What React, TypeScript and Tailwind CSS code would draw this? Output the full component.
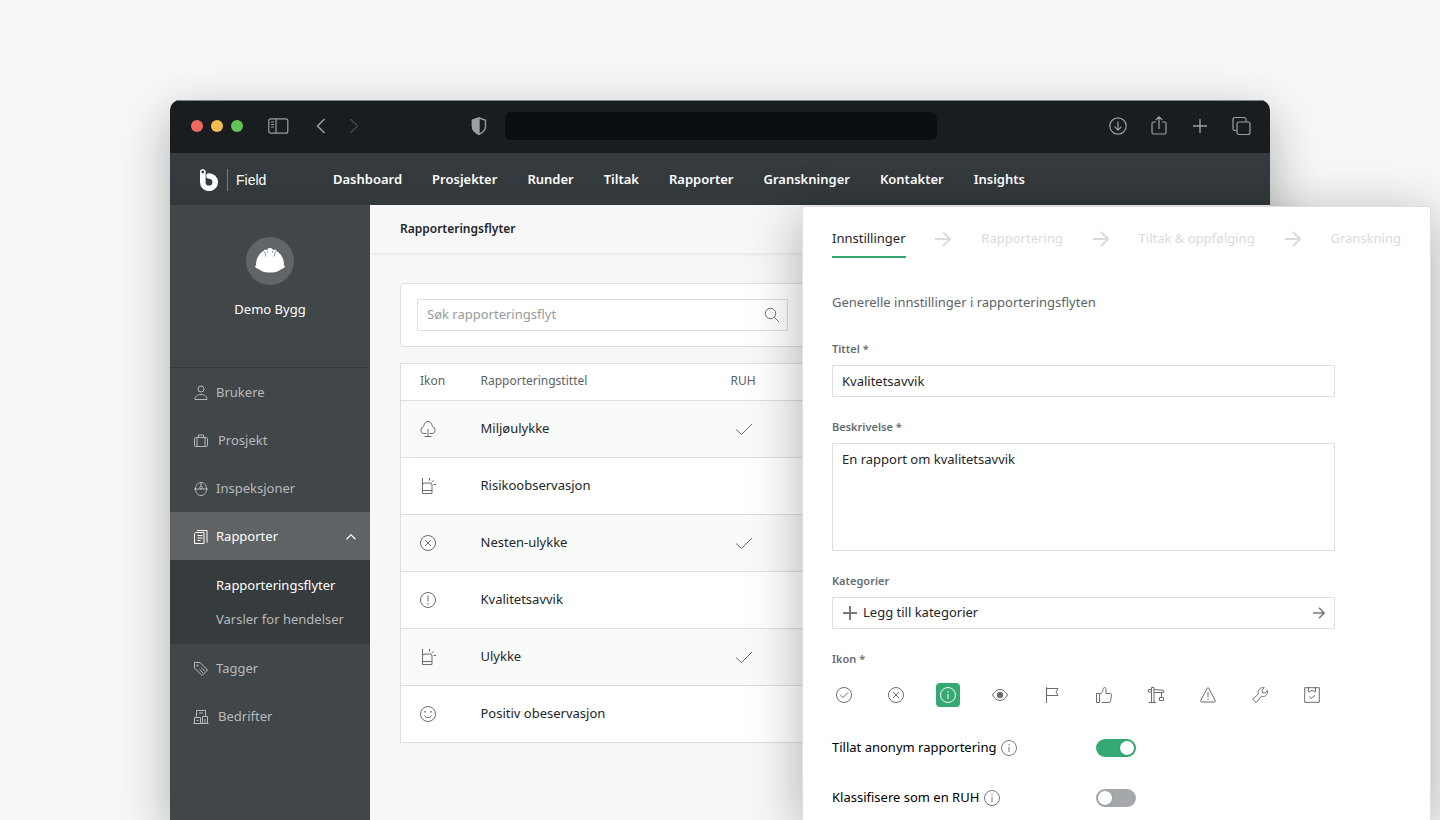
import React, { useState } from "react";
import clsx from "clsx";

type IconProps = { children: React.ReactNode; className?: string; size?: number; strokeWidth?: number };

// Thin outline icon on a 16px grid
function Icon({ children, className, size = 16, strokeWidth = 1 }: IconProps) {
  return (
    <svg
      width={size}
      height={size}
      viewBox="0 0 16 16"
      fill="none"
      stroke="currentColor"
      strokeWidth={strokeWidth}
      className={clsx("shrink-0", className)}
      aria-hidden="true"
    >
      {children}
    </svg>
  );
}

const CircleX = <><circle cx="8" cy="8" r="7.5" /><path d="M5 5l6 6M11 5l-6 6" /></>;
const CircleInfo = <><circle cx="8" cy="8" r="7.5" /><path d="M8 6.8V12M8 4v1.4" /></>;
const Siren = <path d="M2.500 0v15.500h9.500v-8.500q0-2-2-2h-5q-2.500 0-2.500 2M2.500 12.500h9.500M9.500 0v2.500M11.500 4.300l2-2M13.500 6.500h2.500" />;
const ArrowRight = <path d="M0 8h15M8 1l7 7-7 7" />;

const navItems = ["Dashboard", "Prosjekter", "Runder", "Tiltak", "Rapporter", "Granskninger", "Kontakter", "Insights"];

const menuTop = [
  {
    label: "Brukere",
    icon: <><circle cx="8" cy="4" r="3" /><path d="M2 14.500c0-3 2.300-5 6-5s6 2 6 5z" /></>,
  },
  {
    label: "Prosjekt",
    wide: true,
    icon: <><rect x="1.500" y="4.500" width="13" height="9" rx="1" /><path d="M5.500 4.500V2h5v2.500M4 4.500v9M12 4.500v9" /></>,
  },
  {
    label: "Inspeksjoner",
    icon: (
      <>
        <path d="M1 8h14M2.500 8C2.500 4.500 4.500 1.500 8 1.500s5.500 3 5.500 6.500M2.500 8c0 3.800 2.300 6.500 5.500 6.500s5.500-2.700 5.500-6.500M8 1.500V5" />
        <circle cx="8" cy="6.500" r="1.300" />
      </>
    ),
  },
];

const menuBottom = [
  {
    label: "Tagger",
    icon: <><path d="M1.500 1.500h5.500l7.500 7.500-5.500 5.500-7.500-7.500z" /><circle cx="4.500" cy="4.500" r=".6" /><path d="M6.500 8.500l3.500 3.500M8.300 6.700l3.500 3.500" /></>,
  },
  {
    label: "Bedrifter",
    wide: true,
    icon: <><path d="M3.500 7.500v-6h9v6M6 4h4M1.500 8.500h6v6h-6zM9.500 7.500h5v7h-5zM.5 14.500h15M3.500 11.500h2M12 10v4.500" /></>,
  },
];

const rows = [
  {
    title: "Miljøulykke",
    ruh: true,
    icon: <path d="M6.500 12.500H4C2.200 12.500 1 11.300 1 9.500 1 7.500 2 6 3.800 5.200 4 2.700 5.700.5 8 .5s4 2.200 4.200 4.700C14 6 15 7.500 15 9.500c0 1.800-1.200 3-3 3H9.500M8 8v7.500M4.500 15.500h7" />,
  },
  { title: "Risikoobservasjon", ruh: false, icon: Siren },
  { title: "Nesten-ulykke", ruh: true, icon: CircleX },
  { title: "Kvalitetsavvik", ruh: false, icon: <><circle cx="8" cy="8" r="7.500" /><path d="M8 3.500v6M8 11v1.700" /></> },
  { title: "Ulykke", ruh: true, icon: Siren },
  {
    title: "Positiv obeservasjon",
    ruh: false,
    icon: <><circle cx="8" cy="8" r="7.500" /><path d="M4.500 9.500c.8 2.700 6.200 2.700 7 0" /><path d="M5 5v1.500M11 5v1.500" strokeWidth="1.500" /></>,
  },
];

const iconChoices = [
  { name: "Godkjent", icon: <><circle cx="8" cy="8" r="7.500" /><path d="M4.300 8l2.700 2.500 5-5" /></> },
  { name: "Avvist", icon: CircleX },
  { name: "Informasjon", icon: CircleInfo },
  {
    name: "Observasjon",
    icon: <><path d="M.5 8C2.500 4.500 5 2.500 8 2.500s5.500 2 7.500 5.500c-2 3.500-4.500 5.500-7.500 5.500S2.500 11.500.5 8z" /><circle cx="8" cy="8" r="2.800" fill="currentColor" /></>,
  },
  { name: "Flagg", icon: <path d="M2.500 0v16M2.500 1.500h11.500l-2 3.500 2 3.500h-11.500" /> },
  {
    name: "Tommel opp",
    icon: <path d="M.5 6.500h3v9h-3zM5.500 15.500h7.500c.8 0 1.300-.5 1.500-1.200l1-6.300c.1-.9-.4-1.500-1.200-1.500H10V2.500C10 1 9.300.5 8.500.5S7.200 1.200 7 2.500C6.800 5 5.500 6.500 3.500 7" />,
  },
  {
    name: "Kran",
    icon: <path d="M3.500 15.500V.5h2.500v15M.5 15.500h7.500M3.500 2.500h-3v2.500h3M6 2.500l9.500.8v2.200H6M13.500 5.500v5M11.500 10.500h4v3h-4z" />,
  },
  { name: "Advarsel", icon: <path d="M7.200 1.200L.7 13.700c-.3.700 0 1.300.8 1.300h13c.8 0 1.100-.6.8-1.300L8.800 1.200c-.4-.7-1.200-.7-1.600 0zM8 5v5M8 11.500v1.500" /> },
  {
    name: "Verktøy",
    icon: <path d="M.7 12.300l5.500-5.100C5.500 5 6.500 2.500 8.500 1.300 9.700.5 11 .4 12.300.6L10 3.200l.4 2.400 2.500.4 2.500-2.400c.4 2-.4 4.200-2 5.200-1.300.8-2.800 1-4.100.5l-5 6.200z" />,
  },
  { name: "Sjekkliste", icon: <path d="M.7.7h14.600v14.600H.7zM4.500.7v4h1.800l.7-1.200h2l.7 1.200h1.800v-4M5 9.500l2.200 2 4-3.500" /> },
];

function MenuLink({ label, icon, wide }: { label: string; icon: React.ReactNode; wide?: boolean }) {
  return (
    <a href="#" className={clsx("flex h-12 items-center pt-px pl-[23px] text-[#b7babc]", wide ? "gap-[9px]" : "gap-[7px]")}>
      <Icon>{icon}</Icon>
      {label}
    </a>
  );
}

function BrowserBar() {
  return (
    <div className="flex h-[53px] shrink-0 items-center border-t border-[#7f8688] bg-[#191d1f] pr-[19px] pb-[2px] pl-[21px] text-[#9b9fa1]">
      <div className="flex gap-2">
        <span className="size-3 rounded-full bg-[#ee6a5f]" />
        <span className="size-3 rounded-full bg-[#f5bd4f]" />
        <span className="size-3 rounded-full bg-[#61c454]" />
      </div>
      <button className="ml-[25px]" aria-label="Sidefelt">
        <svg width="21" height="16" viewBox="0 0 21 16" fill="none" stroke="currentColor" strokeWidth="1.2">
          <rect x=".8" y=".8" width="19" height="14.400" rx="2" />
          <path d="M8 1v14M3 4h3M3 6.500h3M3 9h3" />
        </svg>
      </button>
      <button className="ml-[27px]" aria-label="Tilbake">
        <svg width="10" height="16" viewBox="0 0 10 16" fill="none" stroke="currentColor" strokeWidth="1.500">
          <path d="M8.500 1L1.500 8l7 7" />
        </svg>
      </button>
      <button className="ml-[23px] text-[#43474a]" aria-label="Frem">
        <svg width="10" height="16" viewBox="0 0 10 16" fill="none" stroke="currentColor" strokeWidth="1.500">
          <path d="M1.500 1l7 7-7 7" />
        </svg>
      </button>
      <div className="flex flex-1 items-center justify-center gap-[18px] pr-[60px]">
        <svg width="16" height="18" viewBox="0 0 16 18" fill="none" stroke="currentColor" strokeWidth="1.400">
          <path d="M8 1l6.500 2.200v6.300c0 3.500-2.500 6-6.500 7.800-4-1.800-6.500-4.300-6.500-7.800V3.200z" />
          <path d="M8 1v16.300c-4-1.800-6.500-4.300-6.500-7.800V3.200z" fill="currentColor" />
        </svg>
        <input aria-label="Adresse" className="h-7 w-[432px] rounded-md bg-[#0b0f11] px-3 outline-none" />
      </div>
      <div className="flex items-center gap-[21px]">
        <button aria-label="Nedlastinger">
          <svg width="20" height="20" viewBox="0 0 20 20" fill="none" stroke="currentColor" strokeWidth="1.200">
            <circle cx="10" cy="10" r="8.200" />
            <path d="M10 5.500v8.500M6.500 10.700l3.500 3.500 3.500-3.500" />
          </svg>
        </button>
        <button aria-label="Del">
          <svg width="20" height="20" viewBox="0 0 20 20" fill="none" stroke="currentColor" strokeWidth="1.200">
            <path d="M7 6H4.500C3.500 6 3 6.500 3 7.500v9c0 1 .5 1.500 1.500 1.500h11c1 0 1.500-.5 1.500-1.500v-9c0-1-.5-1.500-1.500-1.500H13M10 13V1M6.800 4L10 .8 13.200 4" />
          </svg>
        </button>
        <button aria-label="Ny fane">
          <svg width="20" height="20" viewBox="0 0 20 20" fill="none" stroke="currentColor" strokeWidth="1.400">
            <path d="M10 3v14M3 10h14" />
          </svg>
        </button>
        <button aria-label="Faner">
          <svg width="20" height="20" viewBox="0 0 20 20" fill="none" stroke="currentColor" strokeWidth="1.200">
            <rect x="6" y="6" width="13" height="12.500" rx="2" />
            <path d="M6 14.500H4c-1.300 0-2-.7-2-2V3.500c0-1.300.7-2 2-2h9c1.300 0 2 .7 2 2V6" />
          </svg>
        </button>
      </div>
    </div>
  );
}

function TopNav() {
  return (
    <header className="flex h-[52px] shrink-0 items-center bg-linear-to-b from-[#363b3f] to-[#33383b] pt-px pl-[29px] text-white">
      <a href="#" className="flex w-[134px] items-center" aria-label="Field">
        <svg width="20" height="22" viewBox="0 0 20 22" fill="none" stroke="currentColor">
          <path d="M3.800 3v10.200a6.200 6.200 0 1 0 6.200-6.200" strokeWidth="5.600" strokeLinecap="round" />
          <circle cx="3.800" cy="3" r="2" fill="#363b3f" strokeWidth="1.200" />
        </svg>
        <span className="mr-2 ml-2 h-[22px] w-px bg-[#777c7f]" />
        <span className="font-['Liberation_Sans'] text-sm">Field</span>
      </a>
      <nav className="flex gap-[30px] text-[13px] font-semibold">
        {navItems.map((item) => (
          <a key={item} href="#">{item}</a>
        ))}
      </nav>
    </header>
  );
}

function Sidebar() {
  return (
    <aside className="w-[200px] shrink-0 bg-[#414649]">
      <div className="flex h-[163px] flex-col items-center border-b border-[#33383b] pt-8 text-white">
        <span className="flex size-12 items-center justify-center rounded-full bg-[#616568]">
          <svg width="30" height="26" viewBox="0 0 30 26">
            <path
              d="M0 18.500l1-1.500C1 10.500 4 5.500 8.500 3l1-1.500 2.500.5 1-1.500c1.200-.7 2.800-.7 4 0l1 1.500 2.500-.5 1 1.500C26 5.500 29 10.500 29 17l1 1.500-1 1.500c-2 .5-3.500 1.500-5.500 3-5 2-12 2-17 0-2-1.500-3.500-2.500-5.500-3z"
              fill="currentColor"
            />
            <path d="M9.500 3.500l1.500 5M20.500 3.500l-1.500 5M12.500 3v1.500M17.500 3v1.500" stroke="#616568" strokeWidth=".7" fill="none" />
          </svg>
        </span>
        <p className="mt-[14px] leading-5">Demo Bygg</p>
      </div>
      <nav>
        {menuTop.map((item) => <MenuLink key={item.label} {...item} />)}
        <a href="#" className="flex h-12 items-center gap-[7px] bg-[#5f6366] pt-px pr-[13px] pl-[23px] text-white">
          <Icon><path d="M2.500 3.500h8.500v11H1.500v-10zM4 1.500h10v12M4.500 6.500h5M4.500 9h5M4.500 11.500h3" /></Icon>
          <span className="flex-1">Rapporter</span>
          <Icon size={12} strokeWidth={1.500}><path d="M2 11l6-6 6 6" /></Icon>
        </a>
        <div className="bg-[#363b3e] pt-[9px] pb-[7px] pl-[46px]">
          <a href="#" className="flex h-[34px] items-center text-white">Rapporteringsflyter</a>
          <a href="#" className="flex h-[34px] items-center text-[#b7babc]">Varsler for hendelser</a>
        </div>
        {menuBottom.map((item) => <MenuLink key={item.label} {...item} />)}
      </nav>
    </aside>
  );
}

function ReportList() {
  return (
    <main className="min-w-0 flex-1 bg-[#f7f7f7]">
      <div className="flex h-12 items-center pl-[30px] shadow-[0_2px_4px_rgba(0,0,0,0.06)]">
        <h1 className="text-xs font-semibold text-[#222629]">Rapporteringsflyter</h1>
      </div>
      <div className="flex flex-col gap-4 px-[30px] pt-[30px]">
        <div className="rounded-sm border border-[#dcdedf] bg-white p-[15px] pl-4">
          <div className="flex h-8 w-[371px] items-center rounded-[1px] border border-[#dcdedf] pr-[7px] pl-[9px]">
            <input type="search" aria-label="Søk" placeholder="Søk rapporteringsflyt" className="min-w-0 flex-1 outline-none placeholder:text-[#989b9e]" />
            <button aria-label="Søk" className="text-[#6d7173]">
              <Icon><circle cx="6.500" cy="6.500" r="5.200" /><path d="M10.300 10.300l4.700 4.700" /></Icon>
            </button>
          </div>
        </div>
        <table className="w-full border-collapse border border-[#dcdedf] bg-white text-left">
          <thead>
            <tr className="h-[37px] text-xs text-[#5c6468]">
              <th className="w-20 pb-[3px] pl-[19px] font-normal">Ikon</th>
              <th className="w-[250px] pb-[3px] font-normal">Rapporteringstittel</th>
              <th className="pb-[3px] font-normal">RUH</th>
            </tr>
          </thead>
          <tbody>
            {rows.map((row) => (
              <tr key={row.title} className="h-[57px] border-t border-[#dcdedf] odd:bg-[#f9fbf9]">
                <td className="pl-[19px] text-[#696d70]"><Icon>{row.icon}</Icon></td>
                <td className="text-[#222629]">{row.title}</td>
                <td className="pl-[5px] text-[#696d70]">
                  {row.ruh && <Icon><path d="M0 8.500l5.500 5L16 3" /></Icon>}
                </td>
              </tr>
            ))}
          </tbody>
        </table>
      </div>
    </main>
  );
}

function Toggle({ id, label, defaultChecked }: { id: string; label: string; defaultChecked?: boolean }) {
  return (
    <div className="flex h-[18px] items-center">
      <label htmlFor={id} className="flex w-[264px] items-center gap-[5px] text-black">
        {label}
        <Icon className="text-[#75797b]">{CircleInfo}</Icon>
      </label>
      <input
        id={id}
        type="checkbox"
        role="switch"
        defaultChecked={defaultChecked}
        className="flex h-[18px] w-10 appearance-none items-center rounded-full bg-[#a4a8ab] px-[2px] before:size-[14px] before:rounded-full before:bg-white before:shadow-sm before:content-[''] checked:justify-end checked:bg-[#35a973]"
      />
    </div>
  );
}

function SettingsPanel() {
  const [selected, setSelected] = useState("Informasjon");
  const steps = ["Innstillinger", "Rapportering", "Tiltak & oppfølging", "Granskning"];
  const labelClass = "mb-2 block text-[11px] leading-4 font-semibold text-[#666c70]";
  const fieldClass = "block w-full rounded-[1px] border border-[#dcdedf] px-[9px] text-[#222629] outline-none";

  return (
    <section className="absolute top-[206px] right-[9px] bottom-0 w-[629px] overflow-hidden border border-b-0 border-[#dfdfdf] bg-white px-[29px] shadow-[0_10px_50px_rgba(0,0,0,0.3)]">
      <nav className="flex items-center justify-between pt-[15px] text-[#d9dbdc]">
        {steps.map((step, index) => (
          <React.Fragment key={step}>
            {index > 0 && <Icon strokeWidth={2} className="mb-[2px]">{ArrowRight}</Icon>}
            <a
              href="#"
              className={clsx("border-b-2 pt-[6px] pb-2 leading-5", index === 0 ? "border-[#35a973] text-[#222629]" : "border-transparent")}
            >
              {step}
            </a>
          </React.Fragment>
        ))}
      </nav>
      <form className="mr-[66px]">
        <h2 className="mt-[34px] leading-5 text-[#5c6468]">Generelle innstillinger i rapporteringsflyten</h2>
        <div className="mt-[29px]">
          <label htmlFor="title" className={labelClass}>Tittel *</label>
          <input id="title" defaultValue="Kvalitetsavvik" className={clsx(fieldClass, "h-8")} />
        </div>
        <div className="mt-[22px]">
          <label htmlFor="description" className={labelClass}>Beskrivelse *</label>
          <textarea id="description" defaultValue="En rapport om kvalitetsavvik" className={clsx(fieldClass, "h-[108px] resize-none py-[5px] leading-5")} />
        </div>
        <div className="mt-[22px]">
          <label htmlFor="categories" className={labelClass}>Kategorier</label>
          <button id="categories" type="button" className={clsx(fieldClass, "flex h-8 items-center gap-[5px]")}>
            <Icon strokeWidth={2} className="text-[#75797b]"><path d="M8 1v14M1 8h14" /></Icon>
            <span className="flex-1 text-left">Legg till kategorier</span>
            <Icon size={12} strokeWidth={2} className="text-[#75797b]">{ArrowRight}</Icon>
          </button>
        </div>
        <fieldset className="mt-[22px]">
          <legend className={labelClass}>Ikon *</legend>
          <div className="mt-2 flex gap-7">
            {iconChoices.map(({ name, icon }) => (
              <label
                key={name}
                title={name}
                className={clsx(
                  "flex size-6 items-center justify-center rounded-sm",
                  selected === name ? "bg-[#35a973] text-white" : "text-[#696d70]"
                )}
              >
                <input type="radio" name="icon" aria-label={name} checked={selected === name} onChange={() => setSelected(name)} className="sr-only" />
                <Icon>{icon}</Icon>
              </label>
            ))}
          </div>
        </fieldset>
        <div className="mt-8 flex flex-col gap-8">
          <Toggle id="anonymous" label="Tillat anonym rapportering" defaultChecked />
          <Toggle id="ruh" label="Klassifisere som en RUH" />
        </div>
      </form>
    </section>
  );
}

export default function App() {
  return (
    <div className="relative flex h-screen flex-col overflow-hidden bg-[#f7f7f7] px-[170px] pt-[100px] font-['Noto_Sans',sans-serif] text-[13px]">
      <div className="flex min-h-0 flex-1 flex-col rounded-t-xl shadow-[0_16px_50px_rgba(0,0,0,0.3)]">
        <div className="flex min-h-0 flex-1 flex-col overflow-hidden rounded-t-[10px]">
          <BrowserBar />
          <TopNav />
          <div className="flex min-h-0 flex-1">
            <Sidebar />
            <ReportList />
          </div>
        </div>
      </div>
      <SettingsPanel />
    </div>
  );
}
